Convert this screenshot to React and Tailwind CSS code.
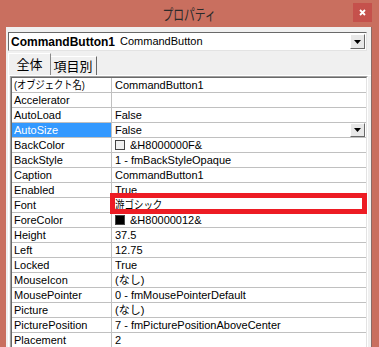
import React from 'react'

const rows = [
  { name: '(オブジェクト名)', value: 'CommandButton1', narrowName: true },
  { name: 'Accelerator', value: '' },
  { name: 'AutoLoad', value: 'False' },
  { name: 'AutoSize', value: 'False', selected: true },
  { name: 'BackColor', value: '&H8000000F&', swatch: 'light' },
  { name: 'BackStyle', value: '1 - fmBackStyleOpaque' },
  { name: 'Caption', value: 'CommandButton1' },
  { name: 'Enabled', value: 'True' },
  { name: 'Font', value: '游ゴシック', marked: true, narrowValue: true },
  { name: 'ForeColor', value: '&H80000012&', swatch: 'dark' },
  { name: 'Height', value: '37.5' },
  { name: 'Left', value: '12.75' },
  { name: 'Locked', value: 'True' },
  { name: 'MouseIcon', value: '(なし)' },
  { name: 'MousePointer', value: '0 - fmMousePointerDefault' },
  { name: 'Picture', value: '(なし)' },
  { name: 'PicturePosition', value: '7 - fmPicturePositionAboveCenter' },
  { name: 'Placement', value: '2' },
]

function DropButton({ className }) {
  return (
    <div className={"flex items-center justify-center bg-[#e8e8e8] border border-t-white border-l-white border-r-[#696969] border-b-[#696969] " + className}>
      <svg width="7" height="4" viewBox="0 0 7 4">
        <path d="M0 0h7L3.5 4z" fill="#000" />
      </svg>
    </div>
  )
}

function Row({ row }) {
  return (
    <>
      <div
        className={
          "h-[15px] border-b border-r border-[#c0c0c0] pl-[2px] leading-[14px] whitespace-nowrap overflow-hidden " +
          (row.selected ? "bg-[#3399ff] text-white" : "text-black")
        }
      >
        {row.narrowName ? (
          <span className="inline-block origin-left scale-x-[0.84]">{row.name}</span>
        ) : (
          row.name
        )}
      </div>
      <div className="relative h-[15px] border-b border-[#c0c0c0] pl-[3px] leading-[14px] whitespace-nowrap flex items-center text-black">
        {row.swatch && (
          <span
            className={
              "w-[10px] h-[10px] mr-[5px] border border-[#444] shrink-0 " +
              (row.swatch === 'dark' ? "bg-black" : "bg-[#f0f0f0]")
            }
          />
        )}
        <span className="flex-1 overflow-hidden">
          {row.narrowValue ? (
            <span className="inline-block origin-left scale-x-[0.86]">{row.value}</span>
          ) : (
            row.value
          )}
        </span>
        {row.selected && <DropButton className="w-[15px] h-[14px] mr-[1px]" />}
        {row.marked && (
          <div className="absolute -left-[2px] -top-[5px] -right-[1px] -bottom-[2px] border-[5px] border-[#ed1c24]" />
        )}
      </div>
    </>
  )
}

export default function App() {
  return (
    <div className="w-[379px] h-[347px] overflow-hidden bg-[#c96f5f] flex flex-col font-['Liberation_Sans','Noto_Sans_CJK_JP',sans-serif]">
      <div className="h-[27px] shrink-0 grid grid-cols-[1fr_auto_1fr]">
        <div />
        <div className="flex items-center justify-center">
          <span className="text-[15px] text-[#2a2a2a] font-['Noto_Sans_CJK_JP',sans-serif] scale-x-[0.72] leading-none">プロパティ</span>
        </div>
        <div className="flex justify-end items-start pt-[3px] pr-[7px]">
          <div className="w-[19px] h-[19px] bg-[#c5514c] flex items-center justify-center">
            <svg width="7" height="7" viewBox="0 0 7 7">
              <path d="M1 1l5 5M6 1l-5 5" stroke="#fff" strokeWidth="1.8" />
            </svg>
          </div>
        </div>
      </div>

      <div className="flex-1 ml-[6px] mr-[7px] bg-[#f0f0f0] pt-[5px] border-r border-[#8a6a64]">
        <div className="ml-[2px] w-[359px] h-[19px] bg-white border border-t-[#696969] border-l-[#696969] border-r-[#e3e3e3] border-b-[#e3e3e3] flex items-center pl-[2px] text-[12px]">
          <span className="font-bold text-black">CommandButton1</span>
          <span className="ml-[5px] text-[11px] text-black">CommandButton</span>
          <div className="flex-1" />
          <DropButton className="w-[15px] h-[15px] mr-[1px]" />
        </div>

        <div className="mt-[2px] ml-[2px] h-[22px] flex items-end text-[13px] font-['Noto_Sans_CJK_JP',sans-serif] text-black">
          <div className="h-[22px] w-[43px] bg-[#f0f0f0] border-l border-t border-white border-r border-r-[#8a8a8a] flex items-start justify-center pt-[1px] leading-[17px] relative z-10">
            全体
          </div>
          <div className="h-[19px] w-[47px] -ml-[1px] border-t border-white border-r border-r-[#696969] flex items-start justify-center pt-[1px] leading-[16px]">
            項目別
          </div>
        </div>

        <div className="ml-[2px] w-[363px] border-l border-t border-white pl-[1px] text-[11px]">
          <div className="w-[358px] border-t border-l border-[#a0a0a0] border-r border-r-white">
            <div className="border-t border-l border-[#696969] border-r border-r-[#e3e3e3] bg-white grid grid-cols-[100px_1fr]">
              {rows.map((r) => (
                <Row key={r.name} row={r} />
              ))}
            </div>
          </div>
        </div>
      </div>
    </div>
  )
}
